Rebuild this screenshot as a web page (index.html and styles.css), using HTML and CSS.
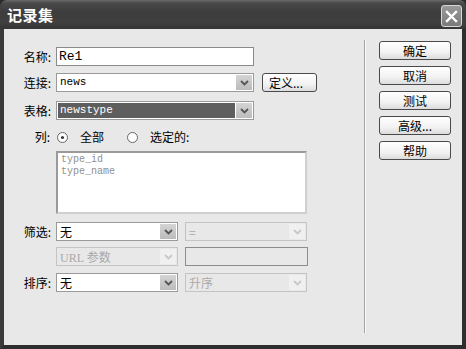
FILE: index.html
```html
<!DOCTYPE html>
<html lang="zh-CN">
<head>
<meta charset="utf-8">
<title>记录集</title>
<link rel="stylesheet" href="styles.css">
</head>
<body>
<div class="window">
  <div class="titlebar">
    <span class="title">记录集</span>
    <span class="close"><svg width="13" height="13" viewBox="0 0 13 13"><path d="M2 2 L11 11 M11 2 L2 11" stroke="#fff" stroke-width="2.4" stroke-linecap="square"/></svg></span>
  </div>
  <div class="frame">
    <div class="form">
      <div class="row r1">
        <span class="label">名称:</span>
        <div class="input mono big">Re1</div>
      </div>
      <div class="row r2">
        <span class="label">连接:</span>
        <div class="select wide"><span class="val mono">news</span><span class="arrow"><svg width="9" height="6" viewBox="0 0 9 6"><path d="M1 1 L4.5 4.5 L8 1" stroke="#555" stroke-width="1.8" fill="none"/></svg></span></div>
        <span class="btn def">定义...</span>
      </div>
      <div class="row r3">
        <span class="label">表格:</span>
        <div class="select wide"><span class="val mono hl">newstype</span><span class="arrow"><svg width="9" height="6" viewBox="0 0 9 6"><path d="M1 1 L4.5 4.5 L8 1" stroke="#555" stroke-width="1.8" fill="none"/></svg></span></div>
      </div>
      <div class="row r4">
        <span class="label">列:</span>
        <span class="radio on"></span><span class="rtext first">全部</span>
        <span class="radio"></span><span class="rtext">选定的:</span>
      </div>
      <div class="row r5">
        <span class="label"></span>
        <div class="list mono"><div>type_id</div><div>type_name</div></div>
      </div>
      <div class="row r6">
        <span class="label">筛选:</span>
        <div class="select half"><span class="val">无</span><span class="arrow"><svg width="9" height="6" viewBox="0 0 9 6"><path d="M1 1 L4.5 4.5 L8 1" stroke="#555" stroke-width="1.8" fill="none"/></svg></span></div>
        <div class="select half dis"><span class="val">=</span><span class="arrow"><svg width="9" height="6" viewBox="0 0 9 6"><path d="M1 1 L4.5 4.5 L8 1" stroke="#c8c8c8" stroke-width="1.8" fill="none"/></svg></span></div>
      </div>
      <div class="row r7">
        <span class="label"></span>
        <div class="select half dis"><span class="val"><span class="serif">URL</span> 参数</span><span class="arrow"><svg width="9" height="6" viewBox="0 0 9 6"><path d="M1 1 L4.5 4.5 L8 1" stroke="#c8c8c8" stroke-width="1.8" fill="none"/></svg></span></div>
        <div class="input half dis"></div>
      </div>
      <div class="row r8">
        <span class="label">排序:</span>
        <div class="select half"><span class="val">无</span><span class="arrow"><svg width="9" height="6" viewBox="0 0 9 6"><path d="M1 1 L4.5 4.5 L8 1" stroke="#555" stroke-width="1.8" fill="none"/></svg></span></div>
        <div class="select half dis"><span class="val">升序</span><span class="arrow"><svg width="9" height="6" viewBox="0 0 9 6"><path d="M1 1 L4.5 4.5 L8 1" stroke="#c8c8c8" stroke-width="1.8" fill="none"/></svg></span></div>
      </div>
    </div>
    <div class="sep"></div>
    <div class="buttons">
      <span class="btn side">确定</span>
      <span class="btn side">取消</span>
      <span class="btn side">测试</span>
      <span class="btn side">高级...</span>
      <span class="btn side">帮助</span>
    </div>
  </div>
</div>
</body>
</html>
```
FILE: styles.css
```css
* { box-sizing: border-box; }
html, body { margin: 0; padding: 0; background: #2a2a2a; }
body {
  font-family: "Noto Sans CJK SC", "Noto Sans", sans-serif;
  font-size: 12px;
  color: #000;
}
.window {
  width: 466px;
  height: 349px;
  display: flex;
  flex-direction: column;
  background: #2e2e2e;
  border-radius: 7px 7px 0 0;
  overflow: hidden;
}
.titlebar {
  height: 29px;
  flex: none;
  display: flex;
  align-items: center;
  justify-content: space-between;
  padding: 0 4px 0 7px;
  background: linear-gradient(to bottom, #6a6a6a 0px, #4a4a4a 3px, #3c3c3c 12px, #404040 22px, #353535 29px);
}
.title {
  color: #fff;
  font-weight: bold;
  font-size: 15px;
  line-height: 16px;
  letter-spacing: 0.5px;
  margin-top: 1px;
}
.close {
  width: 21px;
  height: 22px;
  border: 1px solid #d8d8d8;
  border-radius: 3px;
  background: linear-gradient(to bottom, #9a9a9a, #7a7a7a);
  display: flex;
  align-items: center;
  justify-content: center;
  margin-top: 3px;
}
.frame {
  flex: 1;
  display: flex;
  background: #e8e8e8;
  border-left: 4px solid #3a3a3a;
  border-right: 4px solid #2e2e2e;
  border-bottom: 4px solid #2e2e2e;
}
.form {
  width: 360px;
  padding-top: 18px;
  display: flex;
  flex-direction: column;
}
.row {
  display: flex;
  align-items: center;
}
.label {
  width: 48px;
  margin-right: 4px;
  text-align: right;
  font-size: 12px;
  line-height: 14px;
  white-space: nowrap;
  padding-right: 1px;
}
.mono { font-family: "Liberation Mono", "DejaVu Sans Mono", monospace; }
.serif { font-family: "Liberation Serif", serif; }
.input {
  height: 19px;
  width: 198px;
  background: #fff;
  border: 1px solid #8a8a8a;
  padding: 0 2px;
  line-height: 17px;
}
.input.big { font-size: 13px; }
.select {
  height: 19px;
  background: #fff;
  border: 1px solid #9a9a9a;
  display: flex;
  align-items: stretch;
  padding: 1px;
}
.select.wide { width: 198px; }
.half { width: 122px; }
.select .val {
  flex: 1;
  padding-left: 2px;
  line-height: 15px;
  font-size: 12px;
  white-space: nowrap;
}
.select .val.mono { font-size: 11px; }
.select .val.hl { background: #5e5e5e; color: #fff; margin-right: 1px; }
.arrow {
  width: 16px;
  flex: none;
  background: linear-gradient(to bottom, #d4d4d4, #bcbcbc);
  display: flex;
  align-items: center;
  justify-content: center;
}
.select.dis { background: #e8e8e8; border-color: #c4c4c4; color: #a8a8a8; }
.select.dis .arrow { background: #f0f0f0; }
.input.dis { background: #e8e8e8; border-color: #8c8c8c; width: 123px; }
.half + .half { margin-left: 7px; }
.r1 { margin-top: 0; }
.r2 { margin-top: 7px; }
.r3 { margin-top: 9px; }
.r4 { margin-top: 10px; height: 14px; }
.r5 { margin-top: 7px; }
.r6 { margin-top: 8px; }
.r7 { margin-top: 6px; }
.r8 { margin-top: 7px; }
.r4 .label { width: 47px; margin-right: 5px; }
.radio {
  width: 11px;
  height: 11px;
  border: 1px solid #666;
  border-radius: 50%;
  background: #fff;
  display: inline-flex;
  align-items: center;
  justify-content: center;
  margin-left: 1px;
}
.radio.on::after {
  content: "";
  width: 3px;
  height: 3px;
  border-radius: 50%;
  background: #333;
}
.rtext { margin-left: 12px; line-height: 14px; }
.rtext.first { margin-right: 22px; }
.list {
  width: 251px;
  height: 63px;
  background: #fff;
  border: 2px solid #9a9a9a;
  border-right-color: #d0d0d0;
  border-bottom-color: #d0d0d0;
  color: #909090;
  font-size: 10px;
  line-height: 12px;
  padding: 1px 3px;
}
.btn {
  display: flex;
  align-items: center;
  justify-content: center;
  height: 19px;
  border: 1px solid #4a4a4a;
  border-radius: 3px;
  background: linear-gradient(to bottom, #ffffff, #f2f2f2 60%, #dcdcdc);
  font-size: 12px;
  line-height: 14px;
}
.btn.def { width: 55px; margin-left: 8px; justify-content: flex-start; padding-left: 6px; }
.sep {
  width: 2px;
  margin: 11px 0 12px;
  border-left: 1px solid #a4a4a4;
  border-right: 1px solid #fafafa;
}
.buttons {
  padding-top: 12px;
  padding-left: 13px;
  display: flex;
  flex-direction: column;
  gap: 6px;
}
.btn.side { width: 72px; }
```
